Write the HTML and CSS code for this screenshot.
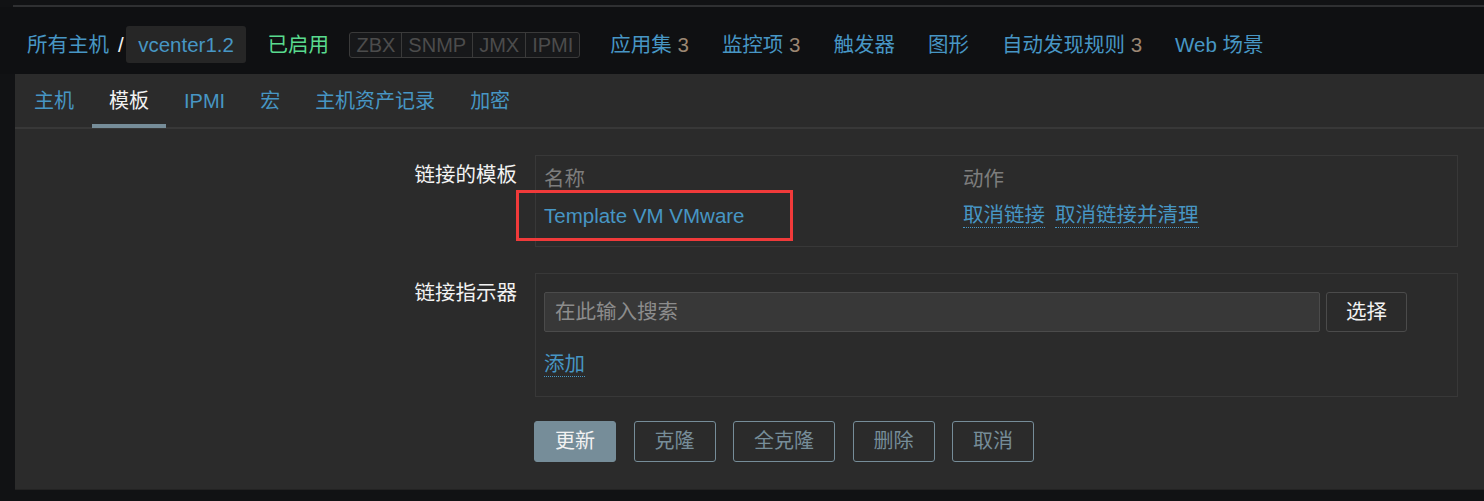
FILE: index.html
```html
<!DOCTYPE html>
<html lang="zh-CN">
<head>
<meta charset="utf-8">
<title>主机 - 模板</title>
<link rel="stylesheet" href="styles.css">
</head>
<body>
<div class="page">
  <div class="topline"></div>
  <header class="header">
    <nav class="breadcrumbs">
      <a class="link crumb">所有主机</a><span class="sep">/</span><span class="crumb-current">vcenter1.2</span>
    </nav>
    <span class="status">已启用</span>
    <div class="avail"><span class="avail-item">ZBX</span><span class="avail-item">SNMP</span><span class="avail-item">JMX</span><span class="avail-item">IPMI</span></div>
    <nav class="host-nav">
      <a class="link nav-item">应用集 <span class="count">3</span></a>
      <a class="link nav-item">监控项 <span class="count">3</span></a>
      <a class="link nav-item">触发器</a>
      <a class="link nav-item">图形</a>
      <a class="link nav-item">自动发现规则 <span class="count">3</span></a>
      <a class="link nav-item">Web 场景</a>
    </nav>
  </header>

  <main class="panel">
    <div class="tabs">
      <a class="tab">主机</a>
      <a class="tab tab-active">模板</a>
      <a class="tab">IPMI</a>
      <a class="tab">宏</a>
      <a class="tab">主机资产记录</a>
      <a class="tab">加密</a>
    </div>

    <form class="form">
      <div class="form-row">
        <label class="form-label">链接的模板</label>
        <div class="form-field">
          <div class="box box-table">
            <div class="trow thead">
              <span class="th">名称</span>
              <span class="th">动作</span>
            </div>
            <div class="trow">
              <span class="td"><a class="link highlight">Template VM VMware</a></span>
              <span class="td actions"><a class="link dotted">取消链接</a><a class="link dotted">取消链接并清理</a></span>
            </div>
          </div>
        </div>
      </div>

      <div class="form-row row-gap">
        <label class="form-label">链接指示器</label>
        <div class="form-field">
          <div class="box box-search">
            <div class="search-line">
              <input class="search-input" type="text" placeholder="在此输入搜索">
              <button class="btn-select" type="button">选择</button>
            </div>
            <div class="add-line"><a class="link dotted">添加</a></div>
          </div>
        </div>
      </div>

      <div class="form-row button-row">
        <span class="form-label"></span>
        <div class="form-field buttons">
          <button class="btn btn-primary" type="button">更新</button>
          <button class="btn" type="button">克隆</button>
          <button class="btn" type="button">全克隆</button>
          <button class="btn" type="button">删除</button>
          <button class="btn" type="button">取消</button>
        </div>
      </div>
    </form>
  </main>
</div>
</body>
</html>
```

FILE: styles.css
```css
* { box-sizing: border-box; }

html, body {
  margin: 0;
  padding: 0;
  background: #111214;
  overflow: hidden;
}

body {
  font-family: "Liberation Sans", "Noto Sans CJK SC", sans-serif;
  font-size: 20.5px;
  line-height: 24px;
  color: #f2f2f2;
}

.page {
  width: 1484px;
  height: 501px;
}

.link {
  color: #4796c4;
  text-decoration: none;
  cursor: pointer;
}

.topline {
  height: 2px;
  margin-top: 5px;
  margin-left: 13px;
  background: #2f3032;
}

.header {
  height: 67px;
  padding: 8px 0 0 27px;
  display: flex;
  align-items: center;
  background: #0f1012;
  white-space: nowrap;
}

.breadcrumbs {
  display: flex;
  align-items: center;
}

.crumb { margin-right: 9px; }

.sep {
  color: #f2f2f2;
  margin-right: 2px;
}

.crumb-current {
  height: 37px;
  line-height: 37px;
  padding: 0 12.5px;
  background: #262626;
  border-radius: 3px;
  color: #4796c4;
}

.status {
  margin-left: 21px;
  color: #59db8f;
}

.avail {
  margin-left: 20.5px;
  display: flex;
  height: 26px;
  border: 1px solid #3a3a3a;
  border-radius: 3px;
  background: #17181a;
  font-size: 20px;
}

.avail-item {
  padding: 0 6px;
  line-height: 24px;
  color: #4c4c4c;
  border-left: 1px solid #3a3a3a;
}

.avail-item:first-child { border-left: 0; }

.host-nav {
  margin-left: 30px;
  display: flex;
  gap: 33px;
}

.count { color: #9b8672; }

.panel {
  margin-left: 15px;
  height: 416px;
  background: #2b2b2b;
  border-bottom: 1px solid #232323;
}

.tabs {
  display: flex;
  height: 55px;
  padding-left: 2px;
  border-bottom: 2px solid #383838;
  font-size: 20px;
}

.tab {
  display: flex;
  align-items: center;
  padding: 0 17px;
  margin-right: 1px;
  color: #4796c4;
  cursor: pointer;
}

.tab-active {
  color: #f2f2f2;
  border-bottom: 4px solid #768d99;
  margin-bottom: -1px;
  padding-top: 4px;
}

.form {
  padding-top: 26px;
  padding-right: 26px;
}

.form-row {
  display: grid;
  grid-template-columns: 502px 1fr;
  column-gap: 18px;
}

.row-gap { margin-top: 26px; }

.form-label {
  text-align: right;
  padding-top: 8px;
  color: #f2f2f2;
}

.box {
  border: 1px solid #383838;
}

.box-table {
  padding: 4px 8px 12px;
}

.trow {
  display: grid;
  grid-template-columns: 419px 1fr;
  height: 37px;
  align-items: center;
}

.th { color: #7d7d7d; }

.highlight {
  position: relative;
}

.highlight::after {
  content: "";
  position: absolute;
  left: -28px;
  right: -48px;
  top: -14px;
  bottom: -14px;
  border: 3px solid #f03a3a;
}

.actions {
  display: flex;
  gap: 10px;
}

.dotted {
  display: inline-block;
  border-bottom: 1px dotted #4796c4;
}

.box-search {
  padding: 18px 8px 19px;
}

.search-line {
  display: flex;
  gap: 6px;
}

.search-input {
  width: 776px;
  height: 40px;
  padding: 0 10px;
  margin: 0;
  background: #383838;
  border: 1px solid #4b4b4b;
  border-radius: 2px;
  color: #f2f2f2;
  font: inherit;
  outline: none;
}

.search-input::placeholder { color: #8c8c8c; }

.btn-select {
  height: 40px;
  padding: 0 19px;
  background: #2b2b2b;
  border: 1px solid #4b4b4b;
  border-radius: 3px;
  color: #f2f2f2;
  font: inherit;
}

.add-line {
  display: flex;
  margin-top: 20px;
}

.button-row { margin-top: 24px; }

.buttons {
  display: flex;
  gap: 17.5px;
  margin-left: -1px;
}

.btn {
  height: 41px;
  padding: 0 20px;
  background: transparent;
  border: 1px solid #768d99;
  border-radius: 3px;
  color: #768d99;
  font-family: inherit;
  font-size: 20px;
  line-height: 39px;
}

.btn-primary {
  background: #768d99;
  color: #f2f2f2;
}
```
